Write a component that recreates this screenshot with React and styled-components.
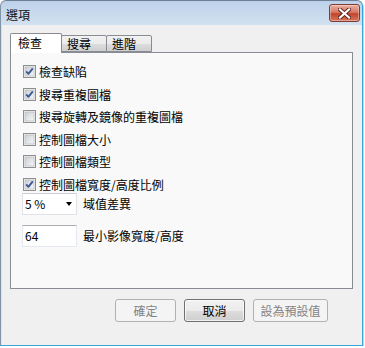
import React from "react";
import styled, { createGlobalStyle } from "styled-components";

const GlobalStyle = createGlobalStyle`
  html, body {
    margin: 0;
    padding: 0;
    background: #ffffff;
  }
  body {
    font-family: "Noto Sans CJK TC", "Noto Sans", sans-serif;
    font-size: 12px;
    color: #000;
  }
`;

const checks = [
  { label: "檢查缺陷", checked: true },
  { label: "搜尋重複圖檔", checked: true },
  { label: "搜尋旋轉及鏡像的重複圖檔", checked: false },
  { label: "控制圖檔大小", checked: false },
  { label: "控制圖檔類型", checked: false },
  { label: "控制圖檔寬度/高度比例", checked: true },
];

const tabs = [
  { label: "檢查", width: 52 },
  { label: "搜尋", width: 46 },
  { label: "進階", width: 46 },
];

const CheckBox = ({ checked }) => (
  <svg width="13" height="13" viewBox="0 0 13 13">
    <defs>
      <linearGradient id="cbfill" x1="0" y1="0" x2="1" y2="1">
        <stop offset="0" stopColor="#cbcfd5" />
        <stop offset="1" stopColor="#f7f7f7" />
      </linearGradient>
    </defs>
    <rect x="0.5" y="0.5" width="12" height="12" fill="#f4f4f4" stroke="#8f8f8f" />
    <rect x="2" y="2" width="9" height="9" fill="url(#cbfill)" stroke="#aeb3b9" strokeWidth="0.6" />
    {checked && (
      <path
        d="M3.2 6.4 L5.4 8.8 L9.8 3.4"
        fill="none"
        stroke="#3d5a98"
        strokeWidth="1.9"
        strokeLinejoin="round"
      />
    )}
  </svg>
);

const CloseIcon = () => (
  <svg width="13" height="11" viewBox="0 0 13 11">
    <path d="M2 1.5 L11 9.5 M11 1.5 L2 9.5" stroke="#5b2119" strokeWidth="4" strokeLinecap="square" />
    <path d="M2 1.5 L11 9.5 M11 1.5 L2 9.5" stroke="#ffffff" strokeWidth="2.2" strokeLinecap="square" />
  </svg>
);

export default function App() {
  return (
    <>
      <GlobalStyle />
      <Window>
        <TitleBar>
          <Title>選項</Title>
          <CloseButton>
            <CloseIcon />
          </CloseButton>
        </TitleBar>
        <Client>
          <TabRow>
            {tabs.map((t, i) => (
              <Tab key={t.label} $active={i === 0} $width={t.width}>
                {t.label}
              </Tab>
            ))}
          </TabRow>
          <Panel>
            <CheckList>
              {checks.map((c) => (
                <CheckRow key={c.label}>
                  <CheckBox checked={c.checked} />
                  <span>{c.label}</span>
                </CheckRow>
              ))}
            </CheckList>
            <FieldRow>
              <Combo>
                <span>5 %</span>
                <Arrow />
              </Combo>
              <FieldLabel>域值差異</FieldLabel>
            </FieldRow>
            <FieldRow $top={10}>
              <TextBox>64</TextBox>
              <FieldLabel>最小影像寬度/高度</FieldLabel>
            </FieldRow>
          </Panel>
          <ButtonRow>
            <Button $width={61} disabled>
              確定
            </Button>
            <Button $width={61} $default>
              取消
            </Button>
            <Button $width={75} disabled>
              設為預設值
            </Button>
          </ButtonRow>
        </Client>
      </Window>
    </>
  );
}

const Window = styled.div`
  box-sizing: border-box;
  width: 363px;
  height: 346px;
  display: flex;
  flex-direction: column;
  border: 1px solid;
  border-color: #6c7f96 #38a6da #38a6da #8393a6;
  border-radius: 6px 6px 0 0;
  background: linear-gradient(180deg, #bdd2ea 0px, #d2e1f1 24px, #d9e6f3 100%);
  box-shadow: 1px 1px 0 #a9def3, 2px 2px 0 #ffffff;
`;

const TitleBar = styled.div`
  height: 24px;
  display: flex;
  align-items: flex-start;
  justify-content: space-between;
  padding: 0 2px 0 5px;
`;

const Title = styled.div`
  font-size: 12px;
  line-height: 12px;
  margin-top: 8px;
  color: #111;
`;

const CloseButton = styled.div`
  box-sizing: border-box;
  width: 31px;
  height: 18px;
  margin-top: 3px;
  display: flex;
  align-items: center;
  justify-content: center;
  border: 1px solid #7e3b31;
  border-radius: 3px;
  background: linear-gradient(180deg, #eab0a2 0%, #d77a66 45%, #c2442c 55%, #d8765c 100%);
  box-shadow: inset 0 0 0 1px rgba(255, 255, 255, 0.35);
`;

const Client = styled.div`
  flex: 1;
  margin-left: 1px;
  background: #f0f0f0;
  padding: 8px 9px 0 8px;
  display: flex;
  flex-direction: column;
`;

const TabRow = styled.div`
  display: flex;
  align-items: flex-end;
  height: 20px;
  margin-bottom: -1px;
  position: relative;
  z-index: 1;
`;

const Tab = styled.div`
  box-sizing: border-box;
  width: ${(p) => p.$width}px;
  height: ${(p) => (p.$active ? 20 : 17)}px;
  margin-bottom: ${(p) => (p.$active ? 0 : 1)}px;
  margin-left: ${(p) => (p.$active ? 0 : -1)}px;
  padding-left: ${(p) => (p.$active ? 7 : 5)}px;
  border: 1px solid #898c95;
  border-bottom: ${(p) => (p.$active ? "none" : "1px solid #898c95")};
  border-radius: 2px 2px 0 0;
  background: ${(p) =>
    p.$active ? "#ffffff" : "linear-gradient(180deg, #f2f2f2 0%, #ebebeb 50%, #dddddd 51%, #cfcfcf 100%)"};
  font-size: 12px;
  line-height: ${(p) => (p.$active ? 18 : 15)}px;
  &:first-child {
    margin-left: 0;
  }
`;

const Panel = styled.div`
  box-sizing: border-box;
  height: 237px;
  border: 1px solid #898c95;
  background: #f9f9f9;
  padding: 12px 0 0 12px;
  display: flex;
  flex-direction: column;
`;

const CheckList = styled.div`
  display: flex;
  flex-direction: column;
  gap: 9.6px;
`;

const CheckRow = styled.div`
  display: flex;
  align-items: center;
  gap: 3px;
  height: 13px;
  line-height: 13px;
  font-size: 12px;
  svg {
    flex: none;
  }
`;

const FieldRow = styled.div`
  display: flex;
  align-items: center;
  gap: 6px;
  margin-top: ${(p) => (p.$top ? p.$top : 2)}px;
  margin-left: -1px;
`;

const Combo = styled.div`
  box-sizing: border-box;
  width: 55px;
  height: 22px;
  display: flex;
  align-items: center;
  justify-content: space-between;
  padding: 0 3px 0 2px;
  background: #ffffff;
  border: 1px solid #dfe3e8;
  border-top-color: #c9ced6;
  font-size: 12px;
`;

const Arrow = styled.div`
  width: 0;
  height: 0;
  border-left: 3.5px solid transparent;
  border-right: 3.5px solid transparent;
  border-top: 4px solid #000;
  margin-right: 1px;
`;

const TextBox = styled.div`
  box-sizing: border-box;
  width: 55px;
  height: 22px;
  display: flex;
  align-items: center;
  padding-left: 2px;
  background: #ffffff;
  border: 1px solid #e3e9ef;
  border-top-color: #abadb3;
  font-size: 12px;
`;

const FieldLabel = styled.span`
  font-size: 12px;
`;

const ButtonRow = styled.div`
  display: flex;
  justify-content: flex-end;
  gap: 8px;
  margin-top: 10px;
  padding-right: 25px;
`;

const Button = styled.button`
  box-sizing: border-box;
  width: ${(p) => p.$width}px;
  height: 23px;
  padding: 0;
  font-family: inherit;
  font-size: 12px;
  border-radius: 3px;
  border: 1px solid ${(p) => (p.$default ? "#707070" : "#adb2b5")};
  color: ${(p) => (p.disabled ? "#838383" : "#000")};
  background: ${(p) =>
    p.disabled
      ? "#f4f4f4"
      : "linear-gradient(180deg, #f2f2f2 0%, #ebebeb 50%, #dddddd 51%, #cfcfcf 100%)"};
  box-shadow: ${(p) => (p.disabled ? "none" : "inset 0 0 0 1px rgba(255,255,255,0.7)")};
`;
